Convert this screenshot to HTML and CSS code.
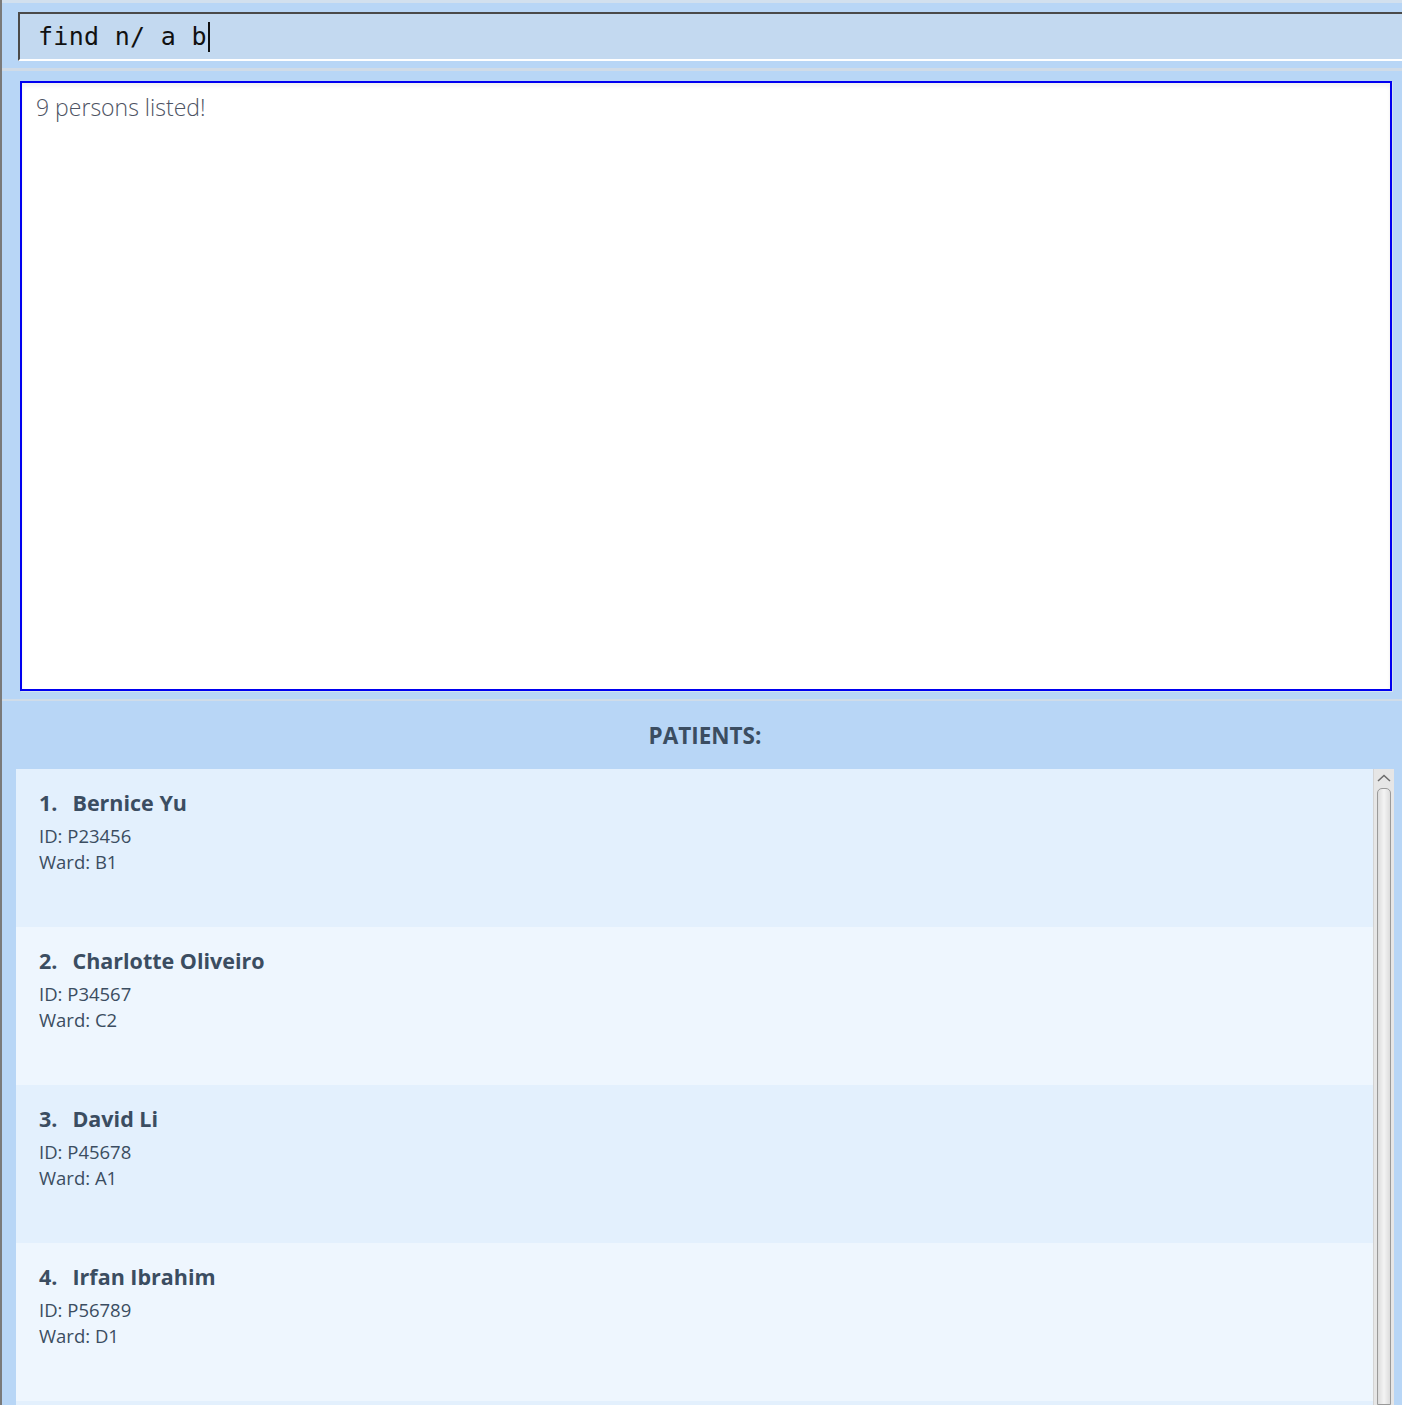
FILE: index.html
```html
<!DOCTYPE html>
<html>
<head>
<meta charset="utf-8">
<link rel="stylesheet" href="styles.css">
</head>
<body>
<div class="app">
  <div class="cmd-bar">
    <div class="cmd-box"><span class="cmd-text">find n/ a b</span><span class="caret"></span></div>
  </div>
  <div class="result-pane">
    <div class="result-box">9 persons listed!</div>
  </div>
  <div class="patients">
    <div class="patients-title">PATIENTS:</div>
    <div class="list-wrap">
      <div class="list">
        <div class="card odd">
          <div class="name"><span class="idx">1.</span>Bernice Yu</div>
          <div class="field id-line">ID: P23456</div>
          <div class="field">Ward: B1</div>
        </div>
        <div class="card even">
          <div class="name"><span class="idx">2.</span>Charlotte Oliveiro</div>
          <div class="field id-line">ID: P34567</div>
          <div class="field">Ward: C2</div>
        </div>
        <div class="card odd">
          <div class="name"><span class="idx">3.</span>David Li</div>
          <div class="field id-line">ID: P45678</div>
          <div class="field">Ward: A1</div>
        </div>
        <div class="card even">
          <div class="name"><span class="idx">4.</span>Irfan Ibrahim</div>
          <div class="field id-line">ID: P56789</div>
          <div class="field">Ward: D1</div>
        </div>
        <div class="card odd"></div>
      </div>
      <div class="scrollbar">
        <div class="arrow">
          <svg width="14" height="8" viewBox="0 0 14 8"><path d="M1 7 L7 1.5 L13 7" fill="none" stroke="#6b6b6b" stroke-width="1.5"/></svg>
        </div>
        <div class="thumb"></div>
      </div>
    </div>
  </div>
</div>
</body>
</html>
```
FILE: styles.css
```css
html, body {
  margin: 0;
  padding: 0;
  height: 1405px;
  overflow: hidden;
  background: #b8d6f6;
}
.app {
  height: 1405px;
  border-left: 2px solid #7a7a7a;
  background: #b8d6f6;
  display: flex;
  flex-direction: column;
  overflow: hidden;
}
.cmd-bar {
  border-top: 3px solid #d2e0ee;
  padding: 9px 0 0 16px;
  box-sizing: border-box;
  height: 71px;
  border-bottom: 3px solid #d0dbe7;
  flex-shrink: 0;
}
.cmd-box {
  height: 49px;
  box-sizing: border-box;
  background: #c3d9f0;
  border-top: 2px solid #4a4a4a;
  border-left: 2px solid #4a4a4a;
  border-bottom: 2px solid #ffffff;
  display: flex;
  align-items: center;
  padding-left: 18px;
}
.cmd-text {
  font-family: "DejaVu Sans Mono", "Liberation Mono", monospace;
  font-size: 25px;
  color: #111;
  white-space: pre;
  letter-spacing: 0.3px;
}
.caret {
  display: inline-block;
  width: 2px;
  height: 30px;
  background: #111;
  margin-left: 1px;
}
.result-pane {
  padding: 10px 10px 8px 18px;
  height: 630px;
  box-sizing: border-box;
  border-bottom: 2px solid #d0dce8;
  flex-shrink: 0;
}
.result-box {
  height: 610px;
  box-sizing: border-box;
  background: #fff;
  border: 2px solid #0000f0;
  box-shadow: inset 0 3px 4px rgba(0,0,0,0.06), 1px 1px 0 #d6e2ee;
  padding: 7px 14px;
  font-family: "Open Sans", "Noto Sans", sans-serif;
  font-weight: 300;
  font-size: 23px;
  color: #4d5363;
  line-height: 34px;
}
.patients {
  flex: 1;
  display: flex;
  flex-direction: column;
  padding-left: 14px;
  min-height: 0;
}
.patients-title {
  height: 68px;
  flex-shrink: 0;
  display: flex;
  align-items: center;
  justify-content: center;
  font-family: "Open Sans", "Noto Sans", sans-serif;
  font-weight: 700;
  font-size: 22.5px;
  color: #3b4d61;
  padding-right: 8px;
}
.list-wrap {
  flex: 1;
  display: flex;
  min-height: 0;
  overflow: hidden;
}
.list {
  width: 1357px;
  display: flex;
  flex-direction: column;
}
.card {
  height: 158px;
  box-sizing: border-box;
  padding: 18px 0 0 23px;
  font-family: "Open Sans", "Noto Sans", sans-serif;
  color: #3b4d61;
  flex-shrink: 0;
}
.card.odd { background: #e3f0fd; }
.card.even { background: #eef6fe; }
.name {
  font-weight: 700;
  font-size: 21.5px;
  line-height: 32px;
}
.idx {
  margin-right: 15px;
}
.field {
  font-size: 18.5px;
  line-height: 26px;
}
.id-line { margin-top: 4px; }
.scrollbar {
  width: 20px;
  background: #e6e6e6;
  border-left: 1px solid #d4d4d4;
  display: flex;
  flex-direction: column;
  align-items: center;
}
.arrow {
  height: 18px;
  display: flex;
  align-items: center;
  justify-content: center;
}
.thumb {
  margin-top: 1px;
  width: 14px;
  flex: 1;
  box-sizing: border-box;
  border: 1px solid #9a9a9a;
  border-radius: 5px 5px 0 0;
  background: linear-gradient(to right, #dcdcdc, #f4f4f4 50%, #dcdcdc);
}
```
